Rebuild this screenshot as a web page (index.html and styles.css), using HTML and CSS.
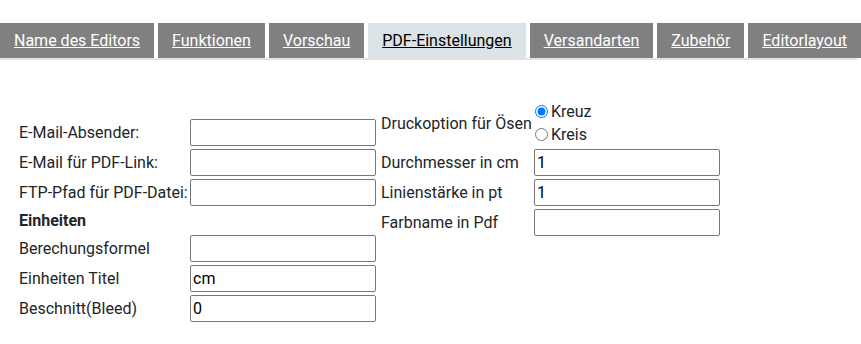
FILE: index.html
```html
<!DOCTYPE html>
<html lang="de">
<head>
  <meta charset="UTF-8" />
  <title>PDF-Einstellungen</title>
  <link rel="stylesheet" href="styles.css">
</head>
<body>
  <ul class="tabs">
    <li><a href="#">Name des Editors</a></li>
    <li><a href="#">Funktionen</a></li>
    <li><a href="#">Vorschau</a></li>
    <li class="active"><a href="#">PDF-Einstellungen</a></li>
    <li><a href="#">Versandarten</a></li>
    <li><a href="#">Zubehör</a></li>
    <li><a href="#">Editorlayout</a></li>
  </ul>

  <div class="content">
    <div class="form left">
      <label>E-Mail-Absender:</label>
      <input type="text">
      <label>E-Mail für PDF-Link:</label>
      <input type="text">
      <label>FTP-Pfad für PDF-Datei:</label>
      <input type="text">
      <div class="heading">Einheiten</div>
      <label>Berechungsformel</label>
      <input type="text">
      <label>Einheiten Titel</label>
      <input type="text" value="cm">
      <label>Beschnitt(Bleed)</label>
      <input type="text" value="0">
    </div>

    <div class="form right">
      <label>Druckoption für Ösen</label>
      <div class="radios">
        <label><input type="radio" name="oesen" checked> Kreuz</label>
        <label><input type="radio" name="oesen"> Kreis</label>
      </div>
      <label>Durchmesser in cm</label>
      <input type="text" value="1">
      <label>Linienstärke in pt</label>
      <input type="text" value="1">
      <label>Farbname in Pdf</label>
      <input type="text">
    </div>
  </div>
</body>
</html>
```

FILE: styles.css
```css
body {
  margin: 0;
  font-family: Roboto, 'Liberation Sans', sans-serif;
  font-size: 16px;
  color: #212529;
  background: #fff;
}

.tabs {
  list-style: none;
  margin: 23px 4px 0 0;
  padding: 0;
  display: flex;
  gap: 4px;
  border-bottom: 2px solid #e3e3e3;
}

.tabs li {
  flex-shrink: 0;
  white-space: nowrap;
  background-color: #808080;
  padding: 8px 14px;
  line-height: 19px;
}

.tabs a {
  color: #fff;
}

.tabs li.active {
  background-color: #dce3e7;
}

.tabs li.active a {
  color: #000;
}

.content {
  display: flex;
  align-items: flex-start;
  padding: 40px 0 0 19px;
}

.form {
  display: grid;
  row-gap: 3px;
  align-items: center;
}

.left {
  grid-template-columns: 171px 186px;
  padding-top: 19px;
  margin-right: 5px;
}

.right {
  grid-template-columns: 153px 186px;
  grid-template-rows: 46px;
}

.heading {
  grid-column: 1 / 3;
  font-weight: bold;
  height: 23px;
  line-height: 23px;
}

input[type="text"] {
  box-sizing: border-box;
  width: 186px;
  height: 27px;
  margin: 0;
  padding: 1px 2px;
  border: 1px solid #767676;
  border-radius: 2px;
  font-family: Roboto, 'Liberation Sans', sans-serif;
  font-size: 16px;
  color: #000;
}

.radios label {
  display: flex;
  align-items: center;
  height: 23px;
}

.radios input {
  margin: 0 3px 0 1px;
  width: 13px;
  height: 13px;
}
```
